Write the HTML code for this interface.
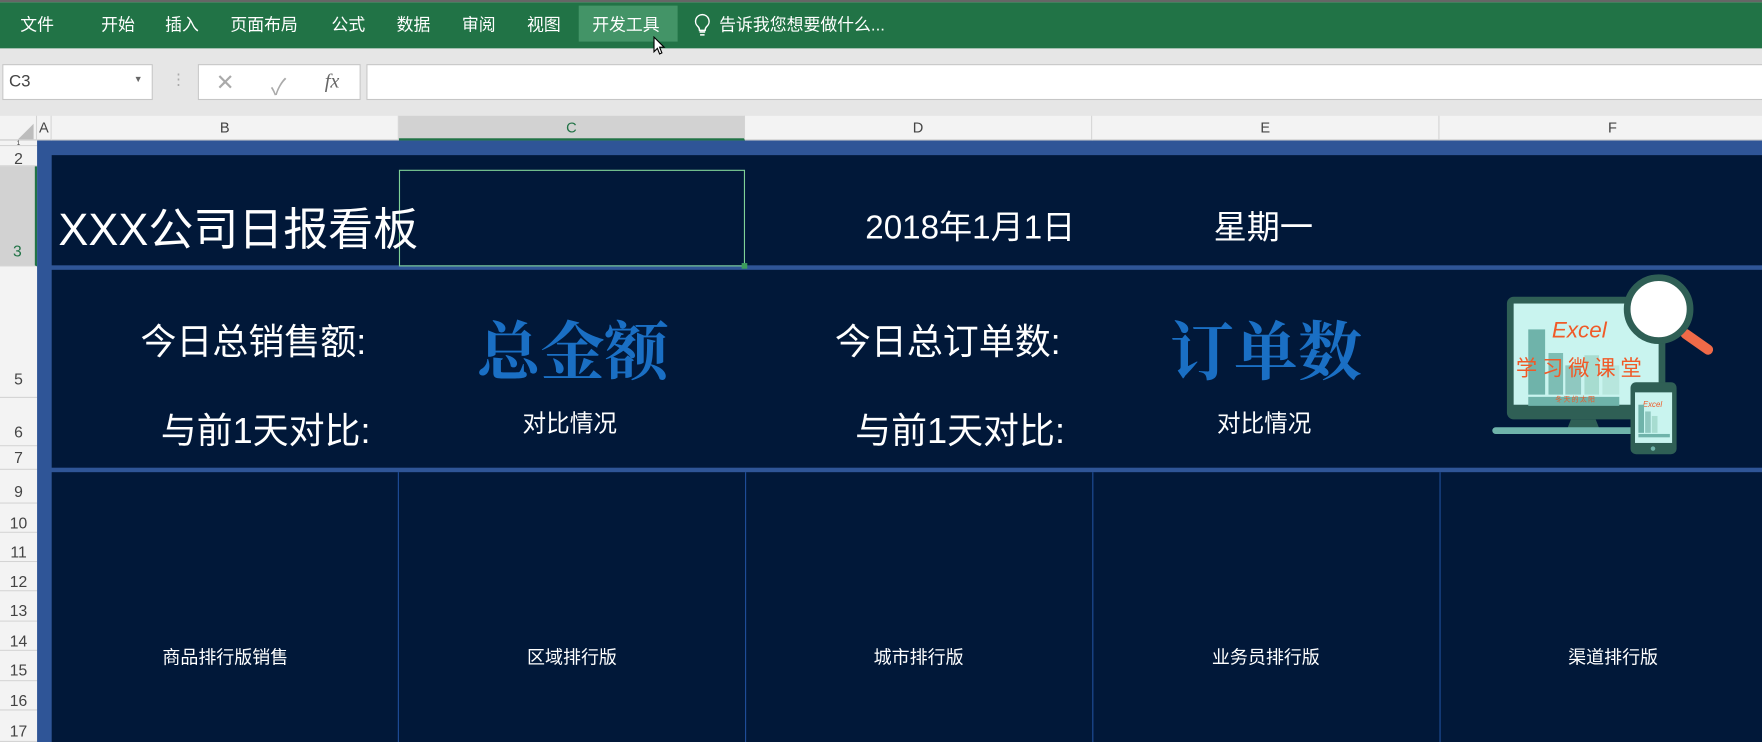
<!DOCTYPE html>
<html><head><meta charset="utf-8"><style>
*{margin:0;padding:0;box-sizing:border-box}
body{width:1762px;height:742px;overflow:hidden;background:#e6e6e6;font-family:"Liberation Sans","Noto Sans CJK SC",sans-serif}
#w{position:absolute;left:0;top:0;width:1568px;height:660px;transform:scale(1.12372,1.12424);transform-origin:0 0;background:#e6e6e6;overflow:hidden}
.a{position:absolute;white-space:nowrap}
.m{color:#fff;font-size:15px;top:11px}
.ch{position:absolute;top:103px;height:22px;background:#f3f3f3;border-right:1px solid #d4d4d4;border-bottom:1px solid #c8c8c8;color:#444;font-size:13px;text-align:center;line-height:22px}
.rh{position:absolute;left:0;width:33px;background:#f3f3f3;border-bottom:1px solid #d4d4d4;color:#444;font-size:14px;text-align:center;overflow:hidden}
.w{color:#fff}
.vl{position:absolute;top:420px;height:240px;width:1px;background:#1f4e9a}
</style></head><body><div id="w">
<div class="a" style="left:0;top:0;width:1568px;height:2px;background:#666"></div>
<div class="a" style="left:0;top:2px;width:1568px;height:41px;background:#217346"></div>
<div class="a" style="left:515px;top:5px;width:88px;height:32px;background:#439467"></div>
<span class="a m" style="left:18px">文件</span>
<span class="a m" style="left:90px">开始</span>
<span class="a m" style="left:147px">插入</span>
<span class="a m" style="left:205px">页面布局</span>
<span class="a m" style="left:295px">公式</span>
<span class="a m" style="left:353px">数据</span>
<span class="a m" style="left:411px">审阅</span>
<span class="a m" style="left:469px">视图</span>
<span class="a m" style="left:527px">开发工具</span>
<svg class="a" style="left:616px;top:11px" width="18" height="22" viewBox="0 0 18 22"><path d="M9 2a6 6 0 0 0-4 10.5c1 1 1.5 2 1.5 3.5h5c0-1.5.5-2.5 1.5-3.5A6 6 0 0 0 9 2zM6.5 17.5h5M7 20h4" fill="none" stroke="#fff" stroke-width="1.3"/></svg>
<span class="a m" style="left:640px">告诉我您想要做什么...</span>
<svg class="a" style="left:581px;top:32px" width="12" height="18"><path d="M1 1v13l3-3 2 5 2-1-2-5h4z" fill="#fff" stroke="#000"/></svg>
<div class="a" style="left:2px;top:57px;width:134px;height:32px;background:#fff;border:1px solid #c6c6c6"></div>
<span class="a" style="left:8px;top:64px;font-size:15px;color:#444">C3</span>
<span class="a" style="left:119px;top:66px;font-size:8px;color:#666">▼</span>
<span class="a" style="left:152px;top:62px;font-size:14px;color:#aaa">⋮</span>
<div class="a" style="left:176px;top:57px;width:145px;height:32px;background:#fff;border:1px solid #c6c6c6"></div>
<span class="a" style="left:192px;top:61px;font-size:20px;color:#aaa">✕</span>
<span class="a" style="left:241px;top:61px;font-size:20px;color:#aaa">✓</span>
<span class="a" style="left:289px;top:62px;font-size:18px;color:#666;font-style:italic;font-family:'Liberation Serif',serif">fx</span>
<div class="a" style="left:326px;top:57px;width:1250px;height:32px;background:#fff;border:1px solid #c6c6c6"></div>
<div class="ch" style="left:0;width:33px"></div>
<svg class="a" style="left:14px;top:110px" width="16" height="14"><path d="M16 0V14H2z" fill="#bdbdbd"/></svg>
<div class="ch" style="left:33px;width:13px">A</div>
<div class="ch" style="left:46px;width:309px">B</div>
<div class="ch" style="left:355px;width:308px;background:#d2d2d2;border-bottom:2px solid #217346;color:#217346">C</div>
<div class="ch" style="left:663px;width:309px">D</div>
<div class="ch" style="left:972px;width:309px">E</div>
<div class="ch" style="left:1281px;width:309px">F</div>
<div class="rh" style="top:125px;height:5px;font-size:6px">1</div>
<div class="rh" style="top:130px;height:18px;line-height:22px">2</div>
<div class="rh" style="top:148px;height:89px;background:#d2d2d2;color:#217346;border-right:2px solid #217346;line-height:150px">3</div>
<div class="rh" style="top:237px;height:117px;line-height:200px">5</div>
<div class="rh" style="top:354px;height:43px;line-height:60px">6</div>
<div class="rh" style="top:397px;height:21px;line-height:21px">7</div>
<div class="rh" style="top:418px;height:30px;line-height:38px">9</div>
<div class="rh" style="top:448px;height:26px;line-height:34px">10</div>
<div class="rh" style="top:474px;height:26px;line-height:34px">11</div>
<div class="rh" style="top:500px;height:26px;line-height:34px">12</div>
<div class="rh" style="top:526px;height:27px;line-height:34px">13</div>
<div class="rh" style="top:553px;height:26px;line-height:34px">14</div>
<div class="rh" style="top:579px;height:27px;line-height:34px">15</div>
<div class="rh" style="top:606px;height:26px;line-height:34px">16</div>
<div class="rh" style="top:632px;height:28px;line-height:36px">17</div>
<div class="a" style="left:33px;top:125px;width:1535px;height:535px;background:#2f5597"></div>
<div class="a" style="left:46px;top:138px;width:1522px;height:98px;background:#011839"></div>
<div class="a" style="left:46px;top:240px;width:1522px;height:176px;background:#011839"></div>
<div class="a" style="left:46px;top:420px;width:1522px;height:240px;background:#011839"></div>
<div class="vl" style="left:354px"></div><div class="vl" style="left:663px"></div><div class="vl" style="left:972px"></div><div class="vl" style="left:1281px"></div>
<div class="a" style="left:355px;top:151px;width:308px;height:86px;border:1px solid #7fd197"></div>
<div class="a" style="left:660px;top:234px;width:5px;height:5px;background:#3c9c5c"></div>
<span class="a w" style="left:52px;top:172px;font-size:40px">XXX公司日报看板</span>
<span class="a w" style="left:770px;top:179px;font-size:29.5px">2018年1月1日</span>
<span class="a w" style="left:1080px;top:179px;font-size:29.5px">星期一</span>
<span class="a w" style="left:125px;top:279px;font-size:32px">今日总销售额:</span>
<span class="a" style="left:424px;top:268px;font-size:57px;color:#1a6fc4;font-family:'Noto Serif CJK SC',serif;font-weight:bold">总金额</span>
<span class="a w" style="left:743px;top:279px;font-size:32px">今日总订单数:</span>
<span class="a" style="left:1041px;top:268px;font-size:57px;color:#1a6fc4;font-family:'Noto Serif CJK SC',serif;font-weight:bold">订单数</span>
<span class="a w" style="left:143px;top:358px;font-size:32px">与前1天对比:</span>
<span class="a w" style="left:465px;top:361px;font-size:21px">对比情况</span>
<span class="a w" style="left:761px;top:358px;font-size:32px">与前1天对比:</span>
<span class="a w" style="left:1083px;top:361px;font-size:21px">对比情况</span>
<div class="a w" style="left:46px;top:571px;width:309px;text-align:center;font-size:16px">商品排行版销售</div>
<div class="a w" style="left:355px;top:571px;width:308px;text-align:center;font-size:16px">区域排行版</div>
<div class="a w" style="left:663px;top:571px;width:309px;text-align:center;font-size:16px">城市排行版</div>
<div class="a w" style="left:972px;top:571px;width:309px;text-align:center;font-size:16px">业务员排行版</div>
<div class="a w" style="left:1281px;top:571px;width:309px;text-align:center;font-size:16px">渠道排行版</div>
<svg class="a" style="left:1290px;top:222px" width="278" height="200" viewBox="1290 222 278 200">
<rect x="1341" y="264" width="141" height="109" rx="6" fill="#2f5f55"/>
<rect x="1347" y="270" width="129" height="90" fill="#c9f4ef"/>
<rect x="1360" y="293" width="15" height="58" fill="#6fb3aa"/>
<rect x="1378" y="314" width="13" height="37" fill="#7dbdb4"/>
<rect x="1393" y="325" width="14" height="26" fill="#8fc8c0"/>
<rect x="1410" y="316" width="13" height="35" fill="#a7dcd0"/>
<rect x="1426" y="325" width="15" height="26" fill="#b7e6dd"/>
<rect x="1360" y="353" width="81" height="8" fill="#6fb3aa"/>
<path d="M1398 373h22l4 10h-30z" fill="#2f5f55"/>
<rect x="1328" y="380" width="145" height="6" rx="3" fill="#6fb3aa"/>
<text x="1381" y="300" font-size="20" fill="#f05a28" font-style="italic" font-family="Liberation Sans">Excel</text>
<text x="1349" y="334" font-size="19" fill="#f05a28" font-family="Noto Sans CJK SC">学 习 微 课 堂</text>
<text x="1384" y="357" font-size="6" fill="#f05a28" font-family="Noto Sans CJK SC">冬 天 的 太 阳</text>
<path d="M1500 297l20 14" stroke="#f06a48" stroke-width="9" stroke-linecap="round"/>
<circle cx="1476" cy="275" r="28" fill="#fff" stroke="#2f5f55" stroke-width="6"/>
<rect x="1451" y="340" width="41" height="64" rx="5" fill="#2f5f55"/>
<rect x="1455" y="349" width="33" height="45" fill="#c9f4ef"/>
<text x="1462" y="362" font-size="7" fill="#f05a28" font-style="italic">Excel</text>
<rect x="1458" y="360" width="5" height="25" fill="#6fb3aa"/><rect x="1464" y="366" width="5" height="19" fill="#8fc8c0"/><rect x="1470" y="370" width="5" height="15" fill="#a7dcd0"/>
<rect x="1458" y="386" width="28" height="3" fill="#6fb3aa"/>
<circle cx="1471" cy="399" r="2" fill="#6fb3aa"/>
</svg>
</div></body></html>
